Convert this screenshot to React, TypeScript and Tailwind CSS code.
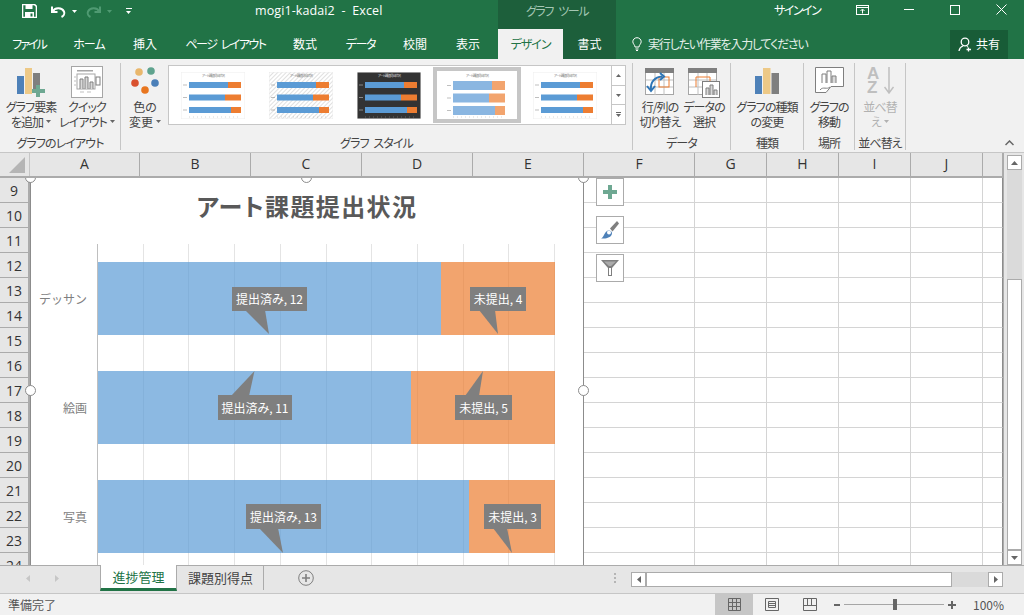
import React from "react";

const FONT = "font-['Noto_Sans_CJK_JP','Noto_Sans',sans-serif] [font-feature-settings:'palt']";

const Caret = ({ color = "#666666", className = "" }: { color?: string; className?: string }) => (
  <svg width="5" height="3" viewBox="0 0 5 3" className={className}>
    <polygon points="0,0 5,0 2.5,3" fill={color} />
  </svg>
);

const SaveIcon = () => (
  <svg width="15" height="14" viewBox="0 0 15 14">
    <path d="M0.5 0.5H12.5L14.5 2.5V13.5H0.5Z" fill="none" stroke="#fff" strokeWidth="1.6" />
    <rect x="3.5" y="1" width="7" height="4" fill="#fff" />
    <rect x="3" y="8" width="9" height="5.5" fill="#fff" />
    <rect x="8.5" y="9.5" width="2" height="3" fill="#217346" />
  </svg>
);

const UndoIcon = ({ color, flip }: { color: string; flip?: boolean }) => (
  <svg width="15" height="13" viewBox="0 0 15 13" className={flip ? "-scale-x-100" : ""}>
    <path d="M1 1.5V7H6.5" fill="none" stroke={color} strokeWidth="2" />
    <path d="M1.8 6.5C3.5 2.8 10.5 1.8 13 6.5C14 8.8 12.5 11 10.5 12" fill="none" stroke={color} strokeWidth="2" />
  </svg>
);

const TitleBar = () => (
  <div className="flex h-[29px] items-stretch bg-[#217346] text-white">
    <div className="flex w-[498px] items-center pb-[7px] pl-[22px]">
      <div className="w-[29px]"><SaveIcon /></div>
      <UndoIcon color="#ffffff" />
      <Caret color="#ffffff" className="ml-[6px]" />
      <div className="ml-[9px]"><UndoIcon color="#4f9a72" flip /></div>
      <Caret color="#4f9a72" className="ml-[6px]" />
      <div className="ml-[13px] flex w-[7px] flex-col items-center gap-[2px]">
        <div className="h-px w-[6px] bg-white" />
        <Caret color="#ffffff" />
      </div>
      <div className="ml-[123px] font-['Open_Sans',sans-serif] text-[12.5px] leading-[18px] tracking-[0.1px] whitespace-pre">
        mogi1-kadai2  -  Excel
      </div>
    </div>
    <div className="flex w-[118px] items-center justify-center bg-[#1d5f3b] pb-[7px] text-[12px] tracking-[-1.4px] [word-spacing:4px] text-[#a4c7b3]">
      グラフ ツール
    </div>
    <div className="flex flex-1 items-center pb-[10px]">
      <div className="ml-[158px] w-[82px] text-[12px] tracking-[-1.5px]">サインイン</div>
      <svg width="14" height="10" viewBox="0 0 14 10" className="mr-[34px]">
        <rect x="0.5" y="0.5" width="12" height="9" fill="none" stroke="#fff" />
        <path d="M0.5 2.5H12.5M6.5 8.5V4.5M4.5 6L6.5 4L8.5 6" fill="none" stroke="#fff" />
      </svg>
      <div className="h-px w-[10px] bg-white" />
      <div className="ml-[36px] h-[10px] w-[10px] border border-white" />
      <svg width="11" height="11" viewBox="0 0 11 11" className="ml-[36px]">
        <path d="M0.5 0.5L10.5 10.5M10.5 0.5L0.5 10.5" stroke="#fff" />
      </svg>
    </div>
  </div>
);

const tabs = [
  { label: "ファイル", w: "w-[58px] tracking-[-2px]" },
  { label: "ホーム", w: "w-[62px] tracking-[-1px]" },
  { label: "挿入", w: "w-[50px]" },
  { label: "ページ レイアウト", w: "w-[111px] tracking-[-1.5px] [word-spacing:3px]" },
  { label: "数式", w: "w-[48px]" },
  { label: "データ", w: "w-[63px] tracking-[-1.2px]" },
  { label: "校閲", w: "w-[46px]" },
  { label: "表示", w: "w-[60px]" },
];

const TabBar = () => (
  <div className="flex h-[30px] items-stretch bg-[#217346] text-[12px] text-white">
    {tabs.map((t) => (
      <div key={t.label} className={`flex items-center justify-center ${t.w}`}>{t.label}</div>
    ))}
    <div className="flex w-[65px] items-center justify-center bg-[#f1f1f1] tracking-[-1px] text-[#217346]">デザイン</div>
    <div className="flex w-[53px] items-center justify-center bg-[#1d5f3b]">書式</div>
    <svg width="10" height="14" viewBox="0 0 10 14" className="ml-[16px] self-center" fill="none" stroke="#fff">
      <path d="M3 10C3 8 1 7 .8 4.8C.8 2.4 2.8 .7 5 .7S9.200 2.400 9.200 4.800C9 7 7 8 7 10ZM3.500 12H6.500M4 13.500H6" />
    </svg>
    <div className="ml-[6px] flex w-[302px] items-center tracking-[-1.2px] text-[#e4efe9]">実行したい作業を入力してください</div>
    <div className="my-auto flex h-[29px] w-[58px] items-center justify-center gap-[3px] bg-[#185c37]">
      <svg width="15" height="15" viewBox="0 0 15 15" fill="none" stroke="#fff" strokeWidth="1.300">
        <circle cx="7" cy="5" r="3.800" />
        <path d="M1 14C1.500 11 3.500 9.500 5 9M9 9.500L10 10M10.500 10.500V14.500M8.500 12.500H13" />
      </svg>
      共有
    </div>
  </div>
);

const BarsIcon = () => (
  <svg width="24" height="26" viewBox="0 0 24 26" className="mb-[4px]">
    <rect x="0" y="8" width="7" height="18" fill="#4e81b8" />
    <rect x="8" y="0" width="7.500" height="26" fill="#edc987" />
    <rect x="16.500" y="5" width="7.500" height="21" fill="#7f7f7f" />
  </svg>
);

const AddElementIcon = () => (
  <svg width="30" height="30" viewBox="0 0 30 30">
    <rect x="1" y="8" width="7" height="18" fill="#4e81b8" />
    <rect x="9" y="0" width="7" height="26" fill="#edc987" />
    <rect x="17" y="5" width="7" height="17" fill="#7f7f7f" />
    <path d="M20 17H24V21H29V25H24V29H20V25H16V21H20Z" fill="#6ea892" />
  </svg>
);

const QuickLayoutIcon = () => (
  <svg width="32" height="32" viewBox="0 0 32 32">
    <rect x="0.500" y="0.500" width="31" height="31" fill="#fff" stroke="#a6a6a6" />
    <rect x="6" y="4" width="16" height="1.500" fill="#a6a6a6" />
    <rect x="6" y="8" width="18" height="15" fill="none" stroke="#a6a6a6" />
    <path d="M9 23V13H12V23M14 23V11H17V23M19 23V16H22V23" fill="#d9d9d9" stroke="#7f7f7f" />
    <rect x="25" y="11" width="4" height="8" fill="none" stroke="#7f7f7f" />
    <path d="M3 11H5M3 15H5M3 19H5M9 26H13M16 26H20" stroke="#bfbfbf" />
  </svg>
);

const ColorsIcon = () => (
  <svg width="30" height="28" viewBox="0 0 30 28" className="mb-[3px]">
    <circle cx="9" cy="5" r="3.800" fill="#e9b76c" />
    <circle cx="21" cy="4" r="3.800" fill="#5fa38e" />
    <circle cx="5" cy="16" r="3.800" fill="#d9512f" />
    <circle cx="25" cy="16" r="3.800" fill="#4a7fb8" />
    <circle cx="15" cy="23" r="3.800" fill="#e8761f" />
  </svg>
);

const SwitchIcon = () => (
  <svg width="30" height="30" viewBox="0 0 30 30">
    <rect x="0.500" y="0.500" width="28" height="26" fill="#fff" stroke="#a6a6a6" />
    <rect x="0" y="0" width="29" height="5" fill="#7f7f7f" />
    <path d="M1 12H28M1 19H28M10 5V27M19 5V27" stroke="#bfbfbf" />
    <rect x="14" y="9" width="10" height="10" fill="none" stroke="#ed7d31" />
    <path d="M6 22C5 14 10 9 17 8.500" fill="none" stroke="#2e75b6" strokeWidth="2" />
    <path d="M2 18L6 23L10 18M15 5L19 8.500L15 12" fill="none" stroke="#2e75b6" strokeWidth="2" />
  </svg>
);

const SelectDataIcon = () => (
  <svg width="32" height="30" viewBox="0 0 32 30">
    <rect x="0.500" y="0.500" width="28" height="26" fill="#fff" stroke="#a6a6a6" />
    <rect x="0" y="0" width="29" height="5" fill="#7f7f7f" />
    <path d="M1 12H28M1 19H28M10 5V27M19 5V27" stroke="#bfbfbf" />
    <path d="M8 19V9H22V14" fill="none" stroke="#ed7d31" />
    <rect x="14.500" y="13.500" width="17" height="16" fill="#fff" stroke="#7f7f7f" />
    <path d="M18 27V20H21V27M22 27V17H25V27M26 27V22H29V27" fill="#d9d9d9" stroke="#7f7f7f" />
  </svg>
);

const MoveChartIcon = () => (
  <svg width="29" height="26" viewBox="0 0 29 26" className="mb-[5px]">
    <path d="M0.500 0.500H28.500V19.500H16L11 25.500H0.500Z" fill="#fff" stroke="#7f7f7f" />
    <path d="M7 16V7H11V16M12 16V4H16V16" fill="#fff" stroke="#7f7f7f" />
    <path d="M17 16V9H21V16" fill="#d9d9d9" stroke="#7f7f7f" />
    <path d="M5 23C8 19 12 23 15 20" fill="none" stroke="#7f7f7f" />
  </svg>
);

const SortIcon = () => (
  <div className="relative mb-[3px] h-[28px] w-[26px] font-['Liberation_Sans',sans-serif] text-[17px] leading-[14px] font-bold text-[#bfbfbf]">
    <div>A</div>
    <div>Z</div>
    <svg width="10" height="27" viewBox="0 0 10 27" className="absolute top-0 right-[-1px]" fill="none" stroke="#bfbfbf" strokeWidth="1.500">
      <path d="M5 0V26M0.500 20L5 26L9.500 20" />
    </svg>
  </div>
);

type RibbonButtonProps = {
  icon: React.ReactNode;
  lines: [string, string];
  w: string;
  caret?: boolean;
  muted?: boolean;
};

const RibbonButton = ({ icon, lines, w, caret, muted }: RibbonButtonProps) => (
  <div className={`flex flex-col items-center ${w} ${muted ? "text-[#b1b1b1]" : ""}`}>
    <div className="flex h-[36px] items-end justify-center pb-px">{icon}</div>
    <div className="text-center whitespace-nowrap">{lines[0]}</div>
    <div className="flex items-center justify-center gap-[3px] whitespace-nowrap">
      {lines[1]}
      {caret && <Caret color={muted ? "#b1b1b1" : "#666666"} />}
    </div>
  </div>
);

const RibbonGroup = ({ label, w, children }: { label: string; w: string; children: React.ReactNode }) => (
  <div className={`flex h-[87px] flex-col border-r border-[#c6c6c6] ${w}`}>
    <div className="flex flex-1 items-start">{children}</div>
    <div className="h-[14px] text-center leading-[14px] whitespace-nowrap [word-spacing:3px]">{label}</div>
  </div>
);

const thumbs = [
  { bg: "#ffffff", title: "#7f7f7f", hatch: false, selected: false, pale: false },
  { bg: "#ffffff", title: "#7f7f7f", hatch: true, selected: false, pale: false },
  { bg: "#333333", title: "#d9d9d9", hatch: false, selected: false, pale: false },
  { bg: "#ffffff", title: "#7f7f7f", hatch: false, selected: true, pale: true },
  { bg: "#ffffff", title: "#7f7f7f", hatch: false, selected: false, pale: false },
];

const MiniChart = ({ index }: { index: number }) => {
  const t = thumbs[index];
  const blue = t.pale ? "#8ab6e1" : "#5b9bd5";
  const orange = t.pale ? "#f2a46e" : "#ed7d31";
  const h = t.pale ? 9 : 6;
  return (
    <svg width="64" height="47" viewBox="0 0 64 47">
      <defs>
        <pattern id={`hatch${index}`} width="3" height="3" patternUnits="userSpaceOnUse" patternTransform="rotate(45)">
          <rect width="3" height="3" fill="#fff" />
          <rect width="1" height="3" fill="#e0e0e0" />
        </pattern>
      </defs>
      <rect width="64" height="47" fill={t.hatch ? `url(#hatch${index})` : t.bg} stroke={t.pale ? "none" : "#eeeeee"} />
      <text x="32" y="5" fontSize="3.500" fill={t.title} textAnchor="middle">アート課題提出状況</text>
      {[0, 1, 2].map((r) => {
        const y = (t.pale ? 9 : 10) + r * 12.500;
        const split = [39, 36, 42][r];
        return (
          <g key={r}>
            <rect x="8" y={y} width={split} height={h} fill={blue} />
            <rect x={8 + split} y={y} width={52 - split} height={h} fill={orange} />
            <rect x="2" y={y + h / 2 - 0.500} width="4" height="1" fill={t.title} opacity="0.500" />
          </g>
        );
      })}
      <path d="M8 45H60" stroke={t.title} strokeWidth="0.500" strokeDasharray="1 3" opacity="0.600" />
    </svg>
  );
};

const GalleryButton = ({ children }: { children: React.ReactNode }) => (
  <div className="flex flex-1 items-center justify-center border-b border-[#c6c6c6] last:border-b-0">{children}</div>
);

const Gallery = () => (
  <div className="mt-[2px] ml-[2px] flex h-[60px] w-[458px] border border-[#c6c6c6] bg-white">
    <div className="flex flex-1 items-center">
      {thumbs.map((t, i) => (
        <div
          key={i}
          className={`flex h-[56px] w-[88px] items-center justify-center ${t.selected ? "border-4 border-[#c6c6c6]" : ""}`}
        >
          <MiniChart index={i} />
        </div>
      ))}
    </div>
    <div className="flex w-[14px] flex-col border-l border-[#c6c6c6] bg-white">
      <GalleryButton><Caret className="rotate-180" /></GalleryButton>
      <GalleryButton><Caret /></GalleryButton>
      <GalleryButton>
        <div className="flex flex-col items-center gap-px">
          <div className="h-px w-[5px] bg-[#666666]" />
          <Caret />
        </div>
      </GalleryButton>
    </div>
  </div>
);

const Ribbon = () => (
  <div className="relative flex h-[94px] items-start border-b border-[#c6c6c6] bg-[#f1f1f1] pt-[4px] text-[12px] leading-[15px] tracking-[-0.9px] text-[#444444]">
    <RibbonGroup label="グラフのレイアウト" w="w-[121px]">
      <div className="flex pl-[4px]">
        <RibbonButton w="w-[54px]" icon={<AddElementIcon />} lines={["グラフ要素", "を追加"]} caret />
        <RibbonButton w="w-[58px]" icon={<QuickLayoutIcon />} lines={["クイック", "レイアウト"]} caret />
      </div>
    </RibbonGroup>
    <RibbonGroup label="グラフ スタイル" w="w-[512px]">
      <div className="ml-[3px] w-[42px] tracking-normal">
        <RibbonButton w="w-[42px]" icon={<ColorsIcon />} lines={["色の", "変更"]} caret />
      </div>
      <Gallery />
    </RibbonGroup>
    <RibbonGroup label="データ" w="w-[98px]">
      <div className="flex pl-[3px]">
        <RibbonButton w="w-[48px]" icon={<SwitchIcon />} lines={["行/列の", "切り替え"]} />
        <RibbonButton w="w-[40px]" icon={<SelectDataIcon />} lines={["データの", "選択"]} />
      </div>
    </RibbonGroup>
    <RibbonGroup label="種類" w="w-[73px]">
      <RibbonButton w="w-[72px]" icon={<BarsIcon />} lines={["グラフの種類", "の変更"]} />
    </RibbonGroup>
    <RibbonGroup label="場所" w="w-[51px]">
      <RibbonButton w="w-[50px]" icon={<MoveChartIcon />} lines={["グラフの", "移動"]} />
    </RibbonGroup>
    <RibbonGroup label="並べ替え" w="w-[51px]">
      <RibbonButton w="w-[50px]" icon={<SortIcon />} lines={["並べ替", "え"]} caret muted />
    </RibbonGroup>
    <svg width="9" height="6" viewBox="0 0 9 6" className="absolute right-[10px] bottom-[6px]" fill="none" stroke="#666666" strokeWidth="1.500">
      <path d="M0.500 5L4.500 1L8.500 5" />
    </svg>
  </div>
);

const columns = [
  { name: "A", w: "w-[110px]" },
  { name: "B", w: "w-[111px]" },
  { name: "C", w: "w-[111px]" },
  { name: "D", w: "w-[111px]" },
  { name: "E", w: "w-[111px]" },
  { name: "F", w: "w-[111px]" },
  { name: "G", w: "w-[72px]" },
  { name: "H", w: "w-[72px]" },
  { name: "I", w: "w-[72px]" },
  { name: "J", w: "w-[72px]" },
  { name: "", w: "w-[20px]" },
];

const rows = Array.from({ length: 16 }, (_, i) => i + 9);

const ColumnHeader = () => (
  <div className="flex h-[25px] border-b-2 border-[#ababab] bg-[#e6e6e6] font-['Open_Sans',sans-serif] text-[14px] text-[#333333]">
    <div className="relative w-[30px] border-r border-[#c6c6c6]">
      <div className="absolute right-[4px] bottom-[3px] h-0 w-0 border-b-[16px] border-l-[16px] border-b-[#b5b5b5] border-l-transparent" />
    </div>
    {columns.map((c) => (
      <div key={c.name} className={`flex items-center justify-center border-r border-[#ababab] pb-[2px] ${c.w}`}>{c.name}</div>
    ))}
  </div>
);

const callouts = [
  { text: "提出済み, 12", box: "left-[202px] top-[109px] w-[75px] h-[24px]" },
  { text: "未提出, 4", box: "left-[440px] top-[109px] w-[56px] h-[24px]" },
  { text: "提出済み, 11", box: "left-[188px] top-[217px] w-[74px] h-[25px]" },
  { text: "未提出, 5", box: "left-[425px] top-[217px] w-[57px] h-[25px]" },
  { text: "提出済み, 13", box: "left-[216px] top-[326px] w-[75px] h-[25px]" },
  { text: "未提出, 3", box: "left-[454px] top-[326px] w-[57px] h-[25px]" },
];

const pointers = [
  "245,310 269,334 265,310",
  "479,310 498,334 495,310",
  "231,396 254.500,371 249,396",
  "465,396 483,371 479,396",
  "259,528 283,553 278,528",
  "493,528 512,553 507,528",
];

const chartRows = [
  { label: "デッサン", blue: "w-[343px]" },
  { label: "絵画", blue: "w-[313px]" },
  { label: "写真", blue: "w-[371px]" },
];

const Handle = ({ pos }: { pos: string }) => (
  <div className={`absolute h-[11px] w-[11px] rounded-full border-[1.5px] border-[#8c8c8c] bg-white ${pos}`} />
);

const SideButton = ({ children }: { children: React.ReactNode }) => (
  <div className="flex h-[28px] w-[28px] items-center justify-center border border-[#ababab] bg-white">{children}</div>
);

const Chart = () => (
  <>
    <div className="absolute top-0 left-[30px] h-[420px] w-[554px] border-x border-[#8c8c8c] bg-white">
      <div className="pt-[13px] text-center text-[24px] leading-[30px] font-bold tracking-[1.4px] text-[#595959]">
        アート課題提出状況
      </div>
      <div className="relative mt-[23px] ml-[66px] w-[458px] pt-[18px]">
        <div className="absolute inset-0 grid h-[380px] grid-cols-10 border-l border-[#bfbfbf]">
          {Array.from({ length: 10 }, (_, i) => (
            <div key={i} className="border-r border-[#e4e4e4]" />
          ))}
        </div>
        <div className="relative flex flex-col gap-[36px]">
          {chartRows.map((r) => (
            <div key={r.label} className="relative flex h-[73px] pl-px">
              <div className="absolute top-0 left-[-66px] flex h-full w-[56px] items-center justify-end text-[12px] text-[#7f7f7f] [font-feature-settings:normal]">
                {r.label}
              </div>
              <div className={`bg-[#5b9bd5]/70 ${r.blue}`} />
              <div className="flex-1 bg-[#ed7d31]/70" />
            </div>
          ))}
        </div>
      </div>
    </div>
    <svg width="554" height="420" viewBox="30 178 554 420" className="absolute top-0 left-[30px]">
      {pointers.map((p) => (
        <polygon key={p} points={p} fill="#7f7f7f" />
      ))}
    </svg>
    <div className="absolute top-0 left-[30px] h-[420px] w-[554px] text-[12px] text-white">
      {callouts.map((c) => (
        <div key={c.text} className={`absolute flex items-center justify-center bg-[#7f7f7f] whitespace-nowrap ${c.box}`}>
          {c.text}
        </div>
      ))}
    </div>
    <Handle pos="left-[25px] top-[-6px]" />
    <Handle pos="left-[301px] top-[-6px]" />
    <Handle pos="left-[578px] top-[-6px]" />
    <Handle pos="left-[25px] top-[207px]" />
    <Handle pos="left-[578px] top-[207px]" />
    <div className="absolute top-0 left-[596px] flex flex-col gap-[10px]">
      <SideButton>
        <svg width="14" height="14" viewBox="0 0 14 14"><path d="M5 0H9V5H14V9H9V14H5V9H0V5H5Z" fill="#6ea892" /></svg>
      </SideButton>
      <SideButton>
        <svg width="18" height="18" viewBox="0 0 18 18">
          <path d="M9 7.500L16 0L18 2.500L11.500 10.500Z" fill="#7f7f7f" />
          <path d="M0 17.500C3 16.500 3 11 7 9.500C10 9 12 11.500 10.500 14C9 17 3 18 0 17.500Z" fill="#4e81b8" />
          <circle cx="8" cy="11.500" r="2" fill="#fff" />
        </svg>
      </SideButton>
      <SideButton>
        <svg width="18" height="16" viewBox="0 0 18 16">
          <path d="M0 0H18L11 8V16H7V8Z" fill="#7f7f7f" />
          <path d="M8 8H10V15H8ZM3 1.500H15L10 6H8Z" fill="#ffffff" fillOpacity="0.350" />
          <rect x="8" y="8" width="2" height="7" fill="#fff" />
        </svg>
      </SideButton>
    </div>
  </>
);

const Sheet = () => (
  <div className="relative flex h-[387px] overflow-hidden">
    <div className="w-[30px] border-r-2 border-[#ababab] bg-[#e6e6e6] font-['Open_Sans',sans-serif] text-[14px] text-[#333333]">
      {rows.map((r) => (
        <div key={r} className="flex h-[25px] items-center justify-center border-b border-[#ababab]">{r}</div>
      ))}
    </div>
    <div className="flex-1 bg-white">
      {rows.map((r) => (
        <div key={r} className="flex h-[25px]">
          {columns.map((c) => (
            <div key={c.name} className={`border-r border-b border-[#d4d4d4] last:border-r-[#8c8c8c] ${c.w}`} />
          ))}
        </div>
      ))}
    </div>
    <Chart />
  </div>
);

const ScrollButton = ({ up }: { up?: boolean }) => (
  <div className="flex h-[15px] w-[15px] items-center justify-center border border-[#ababab] bg-white">
    <svg width="7" height="4" viewBox="0 0 7 4" className={up ? "rotate-180" : ""}>
      <polygon points="0,0 7,0 3.500,4" fill="#666666" />
    </svg>
  </div>
);

const VerticalScroll = () => (
  <div className="flex w-[21px] flex-col items-center border-l border-[#ababab] bg-[#e6e6e6] pt-[2px]">
    <div className="flex h-full w-[15px] flex-col bg-[#dadada]">
      <ScrollButton up />
      <div className="h-[109px]" />
      <div className="flex-1 border border-[#ababab] bg-white" />
      <ScrollButton />
    </div>
  </div>
);

const TabsRow = () => (
  <div className="flex h-[28px] items-start border-t border-[#ababab] bg-[#e6e6e6] text-[13px] text-[#444444]">
    <div className="flex h-[24px] w-[100px] items-center gap-[25px] pl-[26px]">
      <svg width="4" height="7" viewBox="0 0 4 7"><polygon points="4,0 4,7 0,3.500" fill="#c6c6c6" /></svg>
      <svg width="4" height="7" viewBox="0 0 4 7"><polygon points="0,0 0,7 4,3.500" fill="#c6c6c6" /></svg>
    </div>
    <div className="-mt-px flex h-[26px] w-[77px] items-center justify-center border-x border-[#ababab] border-b-[3px] border-b-[#217346] bg-white text-[#217346]">
      進捗管理
    </div>
    <div className="flex h-[24px] w-[87px] items-center justify-center border-r border-[#ababab] pl-px">課題別得点</div>
    <svg width="16" height="16" viewBox="0 0 16 16" className="mt-[4px] ml-[34px]" fill="none" stroke="#7f7f7f">
      <circle cx="8" cy="8" r="7.300" />
      <path d="M8 4V12M4 8H12" strokeWidth="1.600" />
    </svg>
    <div className="mt-[7px] ml-[300px] flex w-[2px] flex-col gap-[2px]">
      <div className="h-[2px] bg-[#b5b5b5]" />
      <div className="h-[2px] bg-[#b5b5b5]" />
      <div className="h-[2px] bg-[#b5b5b5]" />
    </div>
    <div className="mt-[6px] ml-[15px] flex h-[15px] w-[372px] bg-[#dadada]">
      <div className="flex w-[15px] items-center justify-center border border-[#ababab] bg-white">
        <svg width="4" height="7" viewBox="0 0 4 7"><polygon points="4,0 4,7 0,3.500" fill="#666666" /></svg>
      </div>
      <div className="w-[306px] border border-[#ababab] bg-white" />
      <div className="flex-1" />
      <div className="flex w-[15px] items-center justify-center border border-[#ababab] bg-white">
        <svg width="4" height="7" viewBox="0 0 4 7"><polygon points="0,0 0,7 4,3.500" fill="#666666" /></svg>
      </div>
    </div>
  </div>
);

const StatusBar = () => (
  <div className="flex h-[22px] items-center border-t border-[#c6c6c6] bg-[#f1f1f1] text-[12px] text-[#555555]">
    <div className="w-[715px] pl-[8px]">準備完了</div>
    <div className="flex h-full w-[38px] items-center justify-center bg-[#c6c6c6]">
      <svg width="13" height="13" viewBox="0 0 13 13" fill="none" stroke="#666666">
        <path d="M.5 .5H12.500V12.500H.5ZM.5 4.500H12.500M.5 8.500H12.500M4.500 .5V12.500M8.500 .5V12.500" />
      </svg>
    </div>
    <svg width="14" height="13" viewBox="0 0 14 13" fill="none" stroke="#666666" className="ml-[12px]">
      <path d="M.5 .5H13.500V12.500H.5ZM3.500 3.500H10.500V9.500H3.500ZM3.500 5.500H10.500M3.500 7.500H10.500" />
    </svg>
    <svg width="14" height="13" viewBox="0 0 14 13" fill="none" stroke="#666666" className="ml-[24px]">
      <path d="M.5 .5H13.500V12.500H.5ZM.5 7.500H13.500M4.500 .5V7.500M8.500 .5V7.500" />
    </svg>
    <div className="ml-[17px] h-[2px] w-[6px] bg-[#666666]" />
    <div className="relative ml-[4px] h-px w-[100px] bg-[#a6a6a6]">
      <div className="absolute top-[-5px] left-[49px] h-[11px] w-[4px] bg-[#666666]" />
    </div>
    <svg width="8" height="8" viewBox="0 0 8 8" className="ml-[4px]"><path d="M3 0H5V3H8V5H5V8H3V5H0V3H3Z" fill="#666666" /></svg>
    <div className="ml-[17px]">100%</div>
  </div>
);

export default function App() {
  return (
    <div className={`flex h-[615px] w-[1024px] flex-col overflow-hidden bg-white ${FONT}`}>
      <TitleBar />
      <TabBar />
      <Ribbon />
      <div className="flex h-[412px]">
        <div className="w-[1003px]">
          <ColumnHeader />
          <Sheet />
        </div>
        <VerticalScroll />
      </div>
      <TabsRow />
      <StatusBar />
    </div>
  );
}
